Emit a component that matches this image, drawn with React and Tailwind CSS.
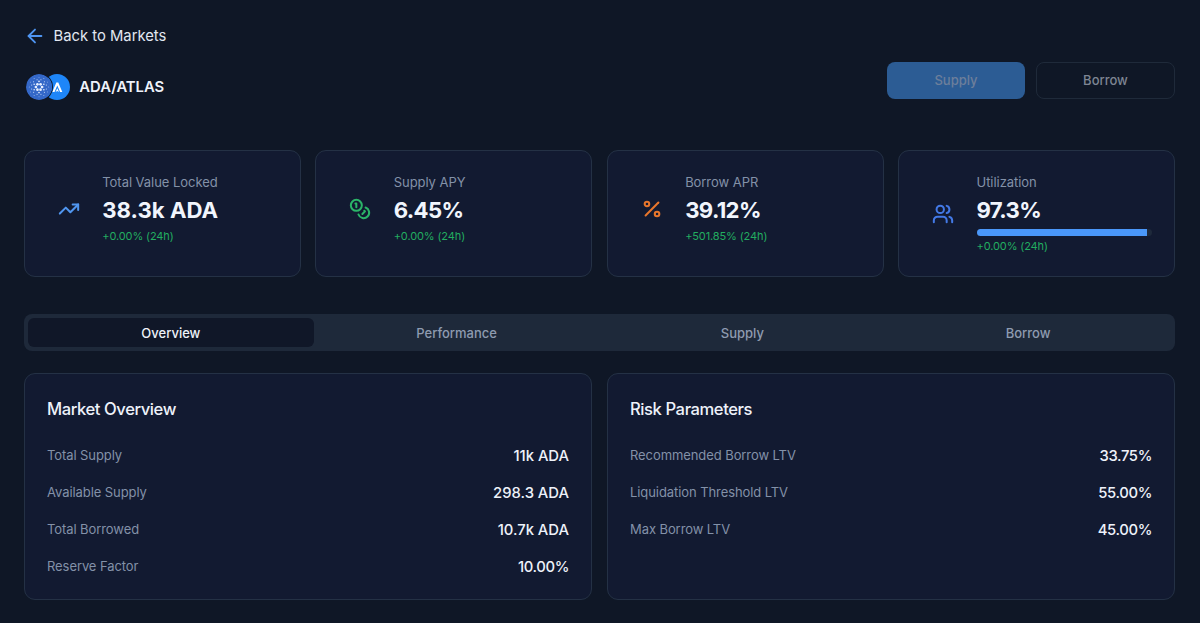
import React from "react";
import { ArrowLeft, Coins, Percent, TrendingUp, Users } from "lucide-react";

const stats = [
  { label: "Total Value Locked", value: "38.3k ADA", change: "+0.00% (24h)", icon: TrendingUp, color: "text-[#5096f0]" },
  { label: "Supply APY", value: "6.45%", change: "+0.00% (24h)", icon: Coins, color: "text-[#2bb568]" },
  { label: "Borrow APR", value: "39.12%", change: "+501.85% (24h)", icon: Percent, color: "text-[#e8762c]" },
  { label: "Utilization", value: "97.3%", change: "+0.00% (24h)", icon: Users, color: "text-[#4379e6]", progress: 97.3 },
];

const tabs = ["Overview", "Performance", "Supply", "Borrow"];

const overview = [
  ["Total Supply", "11k ADA"],
  ["Available Supply", "298.3 ADA"],
  ["Total Borrowed", "10.7k ADA"],
  ["Reserve Factor", "10.00%"],
];

const risk = [
  ["Recommended Borrow LTV", "33.75%"],
  ["Liquidation Threshold LTV", "55.00%"],
  ["Max Borrow LTV", "45.00%"],
];

// rings of dots: [count, radius, dot size, start angle]
const rings = [
  [6, 3.1, 1.35, 0],
  [6, 5.6, 0.8, 30],
  [12, 7.6, 0.5, 15],
  [12, 9.8, 0.4, 0],
];

function CardanoLogo() {
  return (
    <svg viewBox="0 0 26 26" className="relative z-10 size-[26px] shrink-0 rounded-full ring-1 ring-[#111827]">
      <circle cx="13" cy="13" r="13" fill="#3468c8" />
      {rings.map(([count, radius, size, start]) =>
        Array.from({ length: count }, (_, i) => {
          const a = ((start + (i * 360) / count) * Math.PI) / 180;
          return (
            <circle key={`${radius}-${i}`} cx={13 + radius * Math.cos(a)} cy={13 + radius * Math.sin(a)} r={size} fill="#e6efff" />
          );
        })
      )}
    </svg>
  );
}

function AtlasLogo() {
  return (
    <svg viewBox="0 0 26 26" className="-ml-2 size-[26px] shrink-0">
      <circle cx="13" cy="13" r="13" fill="#1e86f8" />
      <path d="M12.3 8.6 h2 L18.3 18 h-2.2 L13.3 11.4 L10.5 18 H8.3 Z" fill="#fff" />
      <path d="M13.3 14.2 L15 18 L13.3 16.9 L11.6 18 Z" fill="#fff" />
    </svg>
  );
}

function StatCard({ label, value, change, icon: Icon, color, progress }) {
  return (
    <div className="flex h-[127px] items-start rounded-[11px] border border-[#243145] bg-[#121a31] px-[22px] pt-[21px]">
      <div className="flex h-[73px] w-11 shrink-0 items-center justify-center">
        <Icon strokeWidth={2.2} className={`size-[22px] ${color} ${progress ? "mt-[10px]" : ""}`} />
      </div>
      <div className="ml-[11.3px] min-w-0 flex-1">
        <p className="text-[13px] leading-[20px] tracking-[-0.05px] text-[#8391a8]">{label}</p>
        <p className={`text-[22.2px] font-bold leading-[35px] text-[#f1f5fd] ${value.endsWith("%") ? "tracking-[-0.65px]" : ""}`}>
          {value}
        </p>
        {progress && (
          <div className="mt-[2px] h-[7px] overflow-hidden rounded-full bg-[#1e293b]">
            <div className="h-full bg-[#4a97f9]" style={{ width: `${progress}%` }} />
          </div>
        )}
        <p className={`text-[11px] leading-[15px] tracking-[-0.12px] text-[#22ad60] ${progress ? "mt-[3px]" : "mt-[1.5px]"}`}>
          {change}
        </p>
      </div>
    </div>
  );
}

function InfoCard({ title, rows }) {
  return (
    <div className="h-[227px] rounded-[11px] border border-[#243145] bg-[#121a31] px-[22px] pt-[22px]">
      <h3 className="text-[16.6px] font-medium leading-[27px] tracking-[-0.42px] text-[#eef2fa]">{title}</h3>
      <div className="mt-[22px] flex flex-col gap-[15px]">
        {rows.map(([label, value]) => (
          <div key={label} className="flex h-[22px] items-center justify-between">
            <span className="text-[13px] tracking-[-0.08px] text-[#8391a8]">{label}</span>
            <span
              className={`text-[14.8px] font-medium leading-[21px] text-[#eef2fa] ${value.endsWith("%") ? "tracking-[-0.35px]" : ""}`}
            >
              {value}
            </span>
          </div>
        ))}
      </div>
    </div>
  );
}

function App() {
  return (
    <div className="h-[623px] overflow-hidden bg-[#0f1726] px-6 pt-[25px] font-['Inter',sans-serif] text-[#eef2fa]">
      <a href="#" className="flex h-[22px] w-fit items-center gap-[7.5px] text-[14.8px] text-[#e2e8f2]">
        <ArrowLeft className="size-[22px] text-[#4f95f2]" />
        Back to Markets
      </a>

      <div className="mt-[15px] flex h-[50px] items-start justify-between pr-px">
        <div className="flex h-[50px] items-center pl-[2px]">
          <CardanoLogo />
          <AtlasLogo />
          <h1 className="ml-[9.3px] text-[14.8px] font-semibold leading-[22px]">ADA/ATLAS</h1>
        </div>
        <div className="flex gap-[11px] text-[13px] font-medium">
          <button className="h-[37px] w-[138px] rounded-[8px] bg-[#2c5c94] text-[#6d7f9b]">Supply</button>
          <button className="h-[37px] w-[139px] rounded-[8px] border border-[#1f2a3a] text-[#7e8593]">Borrow</button>
        </div>
      </div>

      <div className="mt-[38px] grid grid-cols-4 gap-[14.67px] pr-px">
        {stats.map((stat) => (
          <StatCard key={stat.label} {...stat} />
        ))}
      </div>

      <div className="mt-[37px] mr-px grid h-[37px] grid-cols-4 rounded-[8px] bg-[#1e293a] p-1 text-[13px] font-medium">
        {tabs.map((tab, i) => (
          <button key={tab} className={i === 0 ? "rounded-[6px] bg-[#101728] pt-[2px] text-[#eef2fa]" : "pt-[2px] text-[#8e9bb0]"}>
            {tab}
          </button>
        ))}
      </div>

      <div className="mt-[22px] grid grid-cols-2 gap-[15px] pr-px">
        <InfoCard title="Market Overview" rows={overview} />
        <InfoCard title="Risk Parameters" rows={risk} />
      </div>
    </div>
  );
}

export default App;
